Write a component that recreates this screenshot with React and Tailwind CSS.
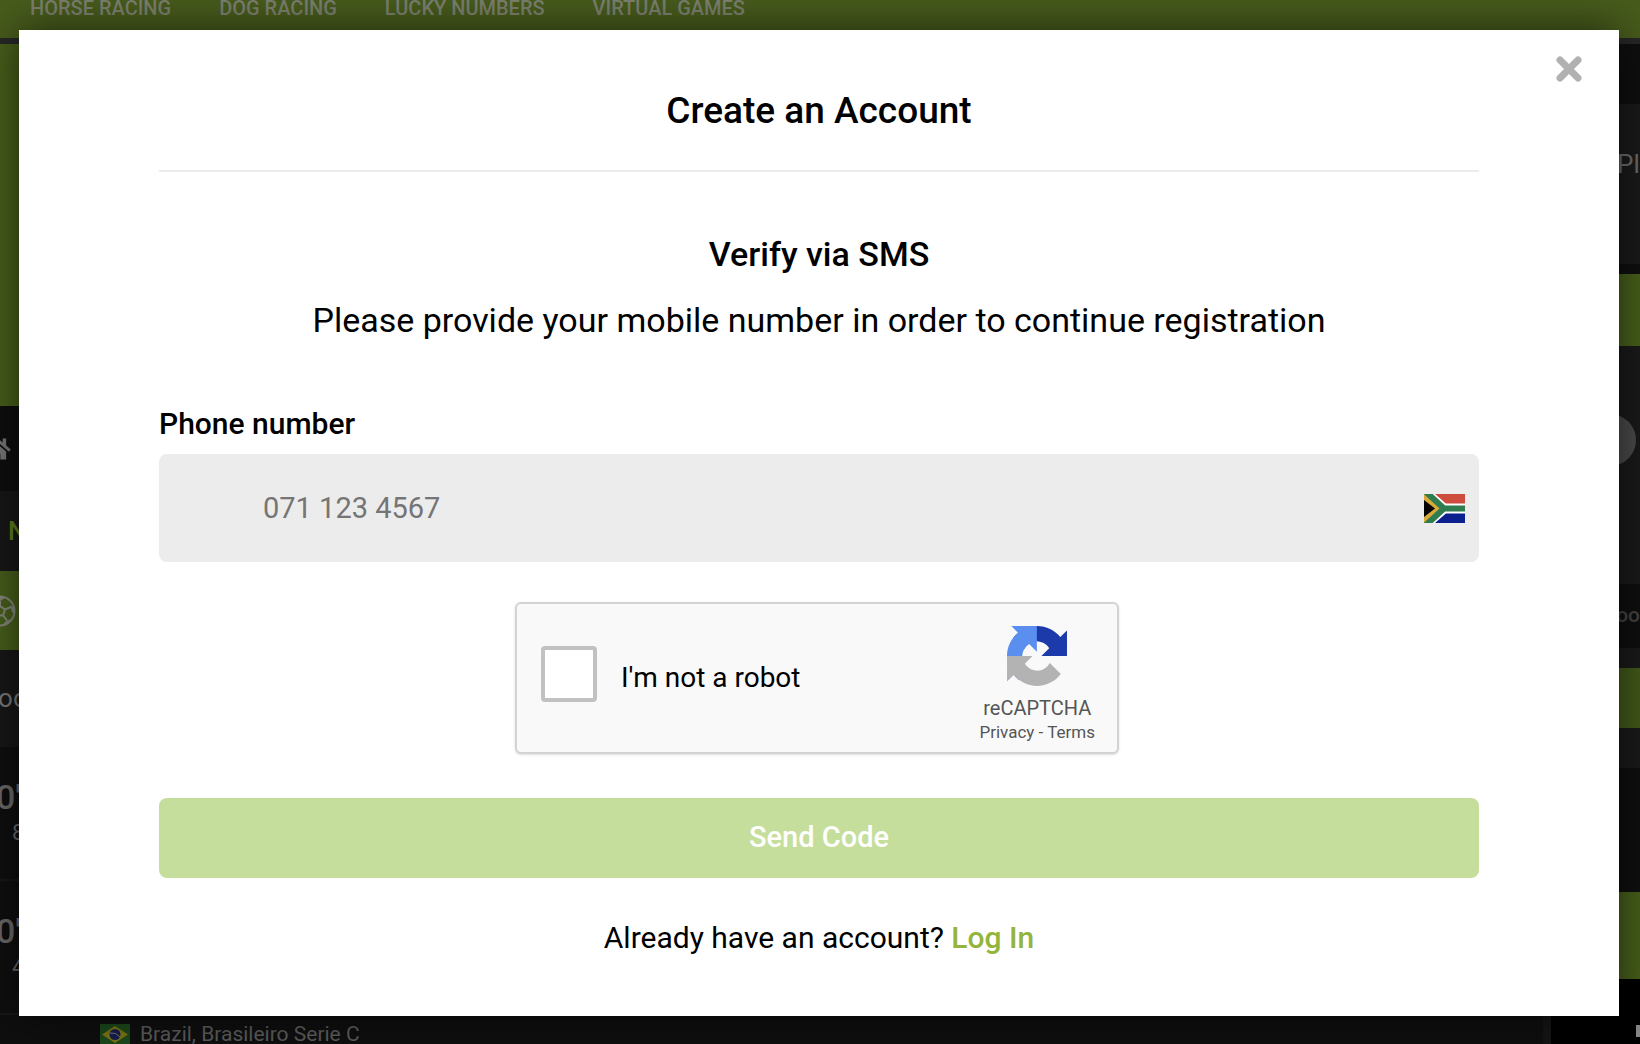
import { useState } from "react";

const NAV_ITEMS = ["HORSE RACING", "DOG RACING", "LUCKY NUMBERS", "VIRTUAL GAMES"];

function HomeIcon() {
  return (
    <svg viewBox="0 0 24 24" className="size-7 shrink-0 fill-[#777]" aria-hidden="true">
      <path d="M12 3 1 12.5l1.6 1.9L12 6.300l9.400 8.100 1.600-1.900-4-3.500V3h-3v3.500zM12 8.200 5 14.200V21h5v-5h4v5h5v-6.800z" />
    </svg>
  );
}

function BallIcon() {
  return (
    <svg viewBox="0 0 32 32" className="size-8 shrink-0" aria-hidden="true">
      <circle cx="16" cy="16" r="14.500" fill="none" stroke="#85887c" strokeWidth="2" />
      <path d="M16 11l5 3.500-2 6h-6l-2-6z M16 11V6 M21 14.500l6-2.500 M19 20.500l4 5 M13 20.500l-4 5 M11 14.500 5 12" fill="none" stroke="#85887c" strokeWidth="2" />
      <path d="M26 10l4.500 3v6L28 17z M22 26l5-2-4 5-5 1.500z M11 3l5 3 5-3-5-1.500z M6 10l-4.500 3v6L4 17z M10 26l-5-2 4 5 5 1.500z" fill="#85887c" />
    </svg>
  );
}

function BrazilFlag() {
  return (
    <svg viewBox="0 0 30 21" className="h-[21px] w-[30px]" aria-hidden="true">
      <path fill="#1c4a1c" d="M0 0h30v21H0z" />
      <path fill="#7d7613" d="m15 2 13 8.500L15 19 2 10.500z" />
      <circle cx="15" cy="10.500" r="5.500" fill="#161f4d" />
      <path d="M10 9q6-1 10 4" stroke="#778" strokeWidth="1" fill="none" />
    </svg>
  );
}

function SouthAfricaFlag() {
  return (
    <svg viewBox="0 0 41 29" className="h-[29px] w-[41px]" role="img" aria-label="South Africa">
      <path fill="#cf4b3e" d="M0 0h41v14.500H0z" />
      <path fill="#0b1f8f" d="M0 14.500h41V29H0z" />
      <path d="M0-3 20 14.500 0 32M20 14.500h21" stroke="#fff" strokeWidth="10" fill="none" />
      <path d="M0-3 20 14.500 0 32z" fill="#d9a93c" />
      <path d="M0 6 11 14.500 0 23z" fill="#000" />
      <path d="M1-3 20 14.500 1 32M19 14.500h22" stroke="#2f7d4f" strokeWidth="6" fill="none" />
    </svg>
  );
}

function RecaptchaLogo() {
  return (
    <svg viewBox="0 0 64 64" className="size-[60px]" aria-hidden="true">
      <path fill="#1c3aa9" d="M64 31.955l-.033-1.37V4.687l-7.16 7.16C50.948 4.674 42.033.093 32.05.093c-10.4 0-19.622 4.96-25.458 12.64l11.736 11.86a15.55 15.55 0 0 1 4.754-5.334c2.05-1.6 4.952-2.906 8.968-2.906.485 0 .86.057 1.135.163 4.976.393 9.288 3.14 11.828 7.124l-8.307 8.307L64 31.953" />
      <path fill="#5a8ff0" d="M31.862.094l-1.37.033H4.594l7.16 7.16C4.58 13.147 0 22.06 0 32.046c0 10.4 4.96 19.622 12.64 25.458L24.5 45.768a15.55 15.55 0 0 1-5.334-4.754c-1.6-2.05-2.906-4.952-2.906-8.968 0-.485.057-.86.163-1.135.393-4.976 3.14-9.288 7.124-11.828l8.307 8.307L31.86.095" />
      <path fill="#b3b3b3" d="M.001 32.045l.033 1.37v25.898l7.16-7.16c5.86 7.173 14.774 11.754 24.76 11.754 10.4 0 19.622-4.96 25.458-12.64l-11.736-11.86a15.55 15.55 0 0 1-4.754 5.334c-2.05 1.6-4.952 2.906-8.968 2.906-.485 0-.86-.057-1.135-.163-4.976-.393-9.288-3.14-11.828-7.124l8.307-8.307c-10.522.04-22.4.066-27.295-.005" />
    </svg>
  );
}

function MatchRow({ minute, score }) {
  return (
    <div className="h-[134px] border-b-2 border-[#171717] bg-[#0f0f0f] pt-[30px] text-[#6a6a6a]">
      <p className="-ml-1 text-[34px] leading-10 font-medium">{minute}</p>
      <p className="pt-0.5 pl-3 text-[22px] leading-7">{score}</p>
    </div>
  );
}

function Backdrop() {
  return (
    <div className="flex h-full flex-col bg-[#0f0f0f]">
      <nav className="flex h-[38px] shrink-0 gap-12 bg-[#485c1c] pl-[30px] text-xl leading-4 font-medium text-[#7c8170]">
        {NAV_ITEMS.map((item) => (
          <a key={item} href="#">{item}</a>
        ))}
      </nav>
      <div className="h-1.5 shrink-0 bg-[#272727]" />
      <div className="flex min-h-0 grow">
        <div className="min-w-0 grow overflow-hidden border-r-8 border-[#151515]">
          <div className="h-[362px] bg-[#485f1b]" />
          <div className="flex h-[85px] items-center bg-[#0e0e0e]">
            <div className="-ml-4"><HomeIcon /></div>
          </div>
          <div className="flex h-20 items-center bg-[#171717] pl-2 text-[26px] font-medium text-[#5f7d1d]">N</div>
          <div className="flex h-[79px] items-center bg-[#485f1b]">
            <div className="-ml-4"><BallIcon /></div>
          </div>
          <div className="flex h-[97px] items-center bg-[#171717] text-[26px] text-[#7a7a7a]">
            <span className="-ml-4">Foo</span>
          </div>
          <MatchRow minute="0'" score="8" />
          <MatchRow minute="0'" score="4" />
          <div className="flex items-center gap-2.5 pt-[7px] pl-[100px] text-[21px] leading-6 text-[#5c5c5c]">
            <BrazilFlag />
            Brazil, Brasileiro Serie C
          </div>
        </div>
        <aside className="flex w-[89px] shrink-0 flex-col overflow-hidden bg-[#1a1a1a]">
          <div className="h-[60px] shrink-0 bg-[#0f0f0f]" />
          <div className="flex h-40 shrink-0 items-start pt-11 pl-[66px] text-[26px] leading-8 text-[#6b6b6b]">Pl</div>
          <div className="h-2.5 shrink-0 bg-[#0f0f0f]" />
          <div className="h-[72px] shrink-0 bg-[#485f1b]" />
          <div className="flex h-[238px] shrink-0 justify-end pt-[68px] pr-1">
            <div className="size-[52px] rounded-full bg-[#4a4a4a]" />
          </div>
          <div className="flex h-16 shrink-0 items-center justify-end bg-[#0f0f0f] text-[21px] font-medium text-[#444]">oo</div>
          <div className="h-5 shrink-0" />
          <div className="h-[60px] shrink-0 bg-[#43591a]" />
          <div className="h-10 shrink-0" />
          <div className="h-[124px] shrink-0 bg-[#0f0f0f]" />
          <div className="h-[87px] shrink-0 bg-[#485f1b]" />
          <div className="flex grow justify-end bg-black pt-[46px]">
            <div className="h-3 w-1 bg-[#888]" />
          </div>
        </aside>
      </div>
    </div>
  );
}

function Captcha() {
  const [checked, setChecked] = useState(false);
  return (
    <div className="mt-10 flex justify-center pr-1">
      <div className="flex h-[152px] w-[604px] items-start rounded-md border-2 border-[#d3d3d3] bg-[#f9f9f9] pr-[22px] pl-6 shadow-sm">
        <input
          id="robot"
          type="checkbox"
          checked={checked}
          onChange={(e) => setChecked(e.target.checked)}
          className="mt-[42px] size-14 shrink-0 appearance-none rounded-sm border-4 border-[#c1c1c1] bg-white checked:bg-[#c6de9b]"
        />
        <label htmlFor="robot" className="mt-[54px] grow pl-6 text-[28px] leading-10">I'm not a robot</label>
        <div className="flex flex-col items-center pt-[22px] text-[#555]">
          <RecaptchaLogo />
          <p className="mt-2 text-xl leading-7">reCAPTCHA</p>
          <p className="text-[17px] leading-5">
            <a href="#">Privacy</a> - <a href="#">Terms</a>
          </p>
        </div>
      </div>
    </div>
  );
}

function AccountDialog() {
  return (
    <div
      role="dialog"
      aria-labelledby="title"
      className="absolute top-[30px] right-[21px] left-[19px] bg-white px-[140px] pt-14 pb-[58px] text-black shadow-[0_0_40px_rgba(0,0,0,0.6)]"
    >
      <button type="button" aria-label="Close" className="absolute top-[25px] right-9">
        <svg viewBox="0 0 28 28" className="size-7" stroke="#b1b1b1" strokeWidth="7" strokeLinecap="round" aria-hidden="true">
          <path d="m5 5 18 18M23 5 5 23" />
        </svg>
      </button>
      <h1 id="title" className="border-b-2 border-[#ececec] pb-[34px] text-center text-[37px] leading-[50px] font-medium">
        Create an Account
      </h1>
      <h2 className="mt-[58px] text-center text-[34px] leading-12 font-medium">Verify via SMS</h2>
      <p className="mt-[18px] text-center text-[34px] leading-12">
        Please provide your mobile number in order to continue registration
      </p>
      <form onSubmit={(e) => e.preventDefault()}>
        <label htmlFor="phone" className="mt-[60px] block text-[30px] leading-10 font-medium">Phone number</label>
        <div className="mt-2.5 flex h-[108px] items-center rounded-lg bg-[#ececec] pr-3.5 pl-[104px]">
          <input
            id="phone"
            type="tel"
            placeholder="071 123 4567"
            className="h-full min-w-0 grow bg-transparent text-[29px] outline-none placeholder:text-[#757575]"
          />
          <SouthAfricaFlag />
        </div>
        <Captcha />
        <button type="submit" className="mt-11 block h-20 w-full rounded-lg bg-[#c6de9b] text-[29px] font-medium text-white">
          Send Code
        </button>
      </form>
      <p className="mt-10 text-center text-[30px] leading-10">
        Already have an account? <a href="#" className="font-medium text-[#93b53c]">Log In</a>
      </p>
    </div>
  );
}

export default function App() {
  return (
    <main className="relative h-screen overflow-hidden font-[Roboto,sans-serif]">
      <Backdrop />
      <AccountDialog />
    </main>
  );
}
